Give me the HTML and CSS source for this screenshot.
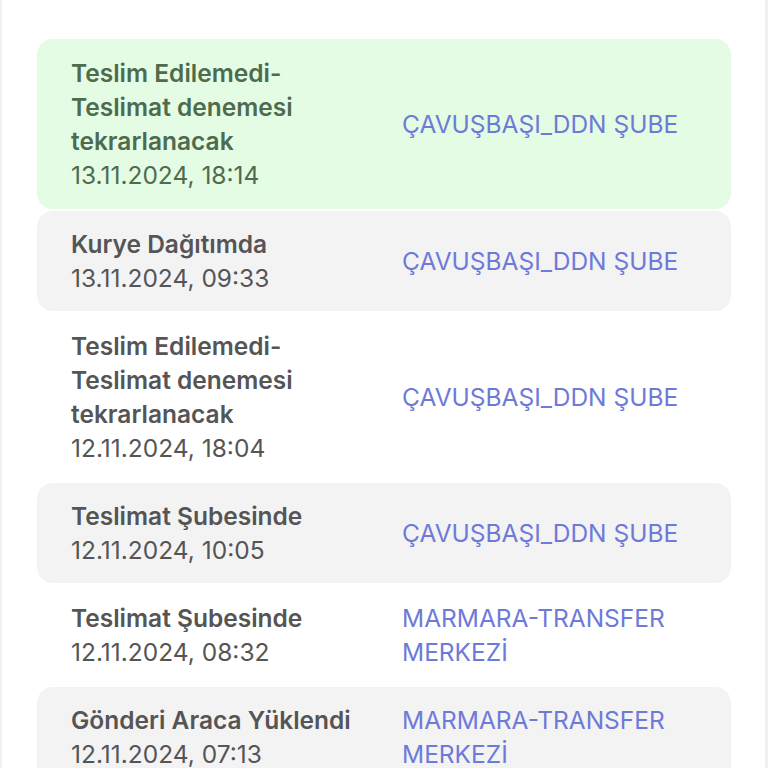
FILE: index.html
```html
<!DOCTYPE html>
<html lang="tr">
<head>
    <meta charset="UTF-8">
    <title>Gönderi Hareketleri</title>
    <meta name="viewport" content="width=device-width, initial-scale=1.0">
    <link rel="stylesheet" href="styles.css">
</head>
<body>
    <div id="trackingPanel">
        <div class="movement current">
            <div class="status">
                <div class="status-title">Teslim Edilemedi-Teslimat denemesi tekrarlanacak</div>
                <div class="status-date">13.11.2024, 18:14</div>
            </div>
            <div class="branch">ÇAVUŞBAŞI_DDN ŞUBE</div>
        </div>
        <div class="movement shaded">
            <div class="status">
                <div class="status-title">Kurye Dağıtımda</div>
                <div class="status-date">13.11.2024, 09:33</div>
            </div>
            <div class="branch">ÇAVUŞBAŞI_DDN ŞUBE</div>
        </div>
        <div class="movement">
            <div class="status">
                <div class="status-title">Teslim Edilemedi-Teslimat denemesi tekrarlanacak</div>
                <div class="status-date">12.11.2024, 18:04</div>
            </div>
            <div class="branch">ÇAVUŞBAŞI_DDN ŞUBE</div>
        </div>
        <div class="movement shaded">
            <div class="status">
                <div class="status-title">Teslimat Şubesinde</div>
                <div class="status-date">12.11.2024, 10:05</div>
            </div>
            <div class="branch">ÇAVUŞBAŞI_DDN ŞUBE</div>
        </div>
        <div class="movement">
            <div class="status">
                <div class="status-title">Teslimat Şubesinde</div>
                <div class="status-date">12.11.2024, 08:32</div>
            </div>
            <div class="branch">MARMARA-TRANSFER MERKEZİ</div>
        </div>
        <div class="movement shaded">
            <div class="status">
                <div class="status-title">Gönderi Araca Yüklendi</div>
                <div class="status-date">12.11.2024, 07:13</div>
            </div>
            <div class="branch">MARMARA-TRANSFER MERKEZİ</div>
        </div>
    </div>
</body>
</html>
```

FILE: styles.css
```css
body {
    margin: 0;
    padding: 0;
    background: #fff;
    font-family: Inter, "Noto Sans", sans-serif;
    color: #555;
}
#trackingPanel {
    min-height: 100vh;
    box-sizing: border-box;
    padding: 39px 34px 0 35px;
    border-left: 2px solid #f1f1f1;
    border-right: 3px solid #f1f1f1;
}
.movement {
    display: grid;
    grid-template-columns: 1fr 1fr;
    column-gap: 36px;
    align-items: center;
    padding: 16px 34px;
    margin-bottom: 2px;
    border-radius: 16px;
    font-size: 24.5px;
    line-height: 34px;
}
.movement.current {
    padding-top: 17px;
    padding-bottom: 17px;
    background-color: #e3fce3;
    color: #4f6b4f;
}
.movement.shaded {
    background-color: #f3f3f4;
}
.status-title {
    font-weight: 600;
}
.branch {
    color: #6e7ad8;
}
```
